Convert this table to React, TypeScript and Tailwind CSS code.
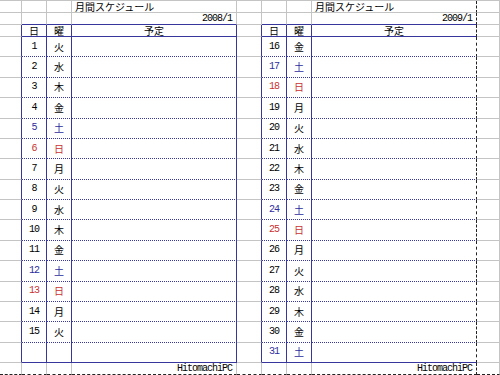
const WD = ["日", "月", "火", "水", "木", "金", "土"];

type Day = { n: number; w: number } | null;

const makeDays = (from: number, to: number, firstWd: number): Day[] => {
  const out: Day[] = [];
  for (let n = from; n <= to; n++) out.push({ n, w: (firstWd + n - from) % 7 });
  return out;
};

// 16 rows per table, the left one has an empty last row
const left: Day[] = [...makeDays(1, 15, 2), null];
const right: Day[] = makeDays(16, 31, 5);

const GRAY_R = "border-r border-r-[#c4c4c4]";
const GRAY_B = "border-b border-b-[#c4c4c4]";
const BLUE_R = "border-r border-r-[#36369c]";
const BLUE_B = "border-b border-b-[#36369c]";
const DOT_B = "border-b border-b-[#36369c] [border-bottom-style:dotted]!";
const BREAK_R = "border-r border-r-[#222] [border-right-style:dashed]!";
const BREAK_B = "border-b border-b-[#222] [border-bottom-style:dashed]!";

const JP = "font-['Noto_Sans_CJK_JP',sans-serif] text-[10px]";
const LAT = "font-['Liberation_Mono','Noto_Sans_CJK_JP',monospace] text-[10px] tracking-[-1px]";

const tableCols = [1, 2, 3, 5, 6, 7];

function cellClass(r: number, c: number) {
  const inTable = r >= 2 && r <= 18;
  let rb = GRAY_R;
  if (c === 7) rb = BREAK_R;
  else if (inTable && c <= 6) rb = BLUE_R;

  let bb = GRAY_B;
  const tc = tableCols.includes(c);
  if (r === 19) bb = BREAK_B;
  else if (tc && (r === 1 || r === 2 || r === 18)) bb = BLUE_B;
  else if (tc && r >= 3 && r <= 17) bb = DOT_B;

  return `${rb} ${bb} flex items-center whitespace-nowrap leading-none min-w-0`;
}

function colorFor(w: number) {
  if (w === 6) return "text-[#2e2ea0]";
  if (w === 0) return "text-[#c83232]";
  return "text-black";
}

function content(r: number, c: number) {
  const side = c >= 4 ? right : left;
  const year = c >= 4 ? "2009/1" : "2008/1";
  const col = c >= 4 ? c - 4 : c;
  if (c === 0 || c === 4 || c === 8) return null;

  if (r === 0 && col === 3) return <span className={`${JP} pl-[3px] text-black`}>月間スケジュール</span>;
  if (r === 1 && col === 3)
    return <span className={`${LAT} ml-auto pr-[4px] text-black`}>{year}</span>;
  if (r === 2) {
    if (col === 1) return <span className={`${JP} mx-auto text-black`}>日</span>;
    if (col === 2) return <span className={`${JP} mx-auto text-black`}>曜</span>;
    return <span className={`${JP} mx-auto text-black`}>予定</span>;
  }
  if (r >= 3 && r <= 18) {
    const d = side[r - 3];
    if (!d) return null;
    if (col === 1) return <span className={`${LAT} mx-auto ${colorFor(d.w)}`}>{d.n}</span>;
    if (col === 2) return <span className={`${JP} mx-auto ${colorFor(d.w)}`}>{WD[d.w]}</span>;
    return null;
  }
  if (r === 19 && col === 3)
    return <span className={`${LAT} ml-auto pr-[4px] text-black`}>HitomachiPC</span>;
  return null;
}

export default function App() {
  const rows = Array.from({ length: 20 }, (_, r) => r);
  const cols = Array.from({ length: 9 }, (_, c) => c);
  return (
    <div className="w-[500px] h-[375px] overflow-hidden bg-white">
      <div className="grid grid-cols-[22px_25px_25px_165px_25px_25px_25px_165px_23px] grid-rows-[12px_12px_12px_repeat(16,20.375px)_12px] border-t border-t-[#c4c4c4]">
        {rows.map((r) =>
          cols.map((c) => (
            <div key={`${r}-${c}`} className={cellClass(r, c)}>
              {content(r, c)}
            </div>
          ))
        )}
      </div>
    </div>
  );
}
